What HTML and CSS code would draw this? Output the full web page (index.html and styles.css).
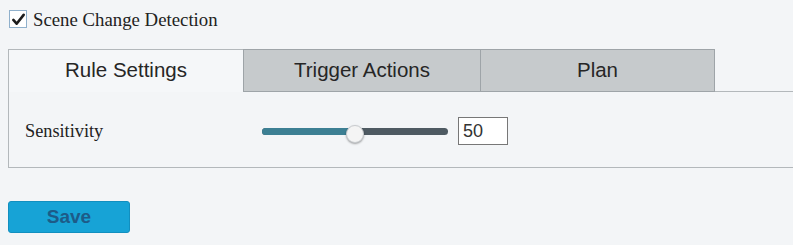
FILE: index.html
```html
<!DOCTYPE html>
<html>
<head>
<meta charset="utf-8">
<link rel="stylesheet" href="styles.css">
</head>
<body>
<div class="page">
  <div class="header">
    <span class="checkbox">
      <svg viewBox="0 0 16 16" width="15" height="15"><path d="M2.5 8.5 L6 12.5 L13.5 3" fill="none" stroke="#1c1c1c" stroke-width="2.8" stroke-linecap="round" stroke-linejoin="round"/></svg>
    </span>
    <span class="header-label">Scene Change Detection</span>
  </div>
  <div class="tabs">
    <div class="tab active">Rule Settings</div>
    <div class="tab mid">Trigger Actions</div>
    <div class="tab last">Plan</div>
    <div class="tab-fill"></div>
  </div>
  <div class="panel">
    <div class="row">
      <span class="row-label">Sensitivity</span>
      <div class="slider">
        <div class="track"><div class="fill"></div></div>
        <div class="thumb"></div>
      </div>
      <input class="num" type="text" value="50">
    </div>
  </div>
  <button class="save">Save</button>
</div>
</body>
</html>
```
FILE: styles.css
```css
* { box-sizing: border-box; }
html, body { margin: 0; padding: 0; }
body {
  background: #f3f5f7;
  width: 793px;
  height: 245px;
  overflow: hidden;
}
.page {
  padding: 10px 0 0 8px;
}
.header {
  display: flex;
  align-items: center;
  gap: 6px;
  height: 18px;
  margin-left: 1px;
}
.checkbox {
  width: 18px;
  height: 18px;
  border: 1px solid #8fb0cc;
  background: #ffffff;
  display: flex;
  align-items: center;
  justify-content: center;
}
.header-label {
  font-family: "Liberation Serif", "Times New Roman", serif;
  font-size: 18.8px;
  color: #222;
  padding-top: 2px;
}
.tabs {
  display: flex;
  margin-top: 21px;
  height: 43px;
}
.tab {
  font-family: "Liberation Sans", Arial, sans-serif;
  font-size: 20.5px;
  color: #262626;
  display: flex;
  align-items: center;
  justify-content: center;
  padding-bottom: 2px;
}
.tab.active {
  width: 235px;
  background: #f5f7f9;
  border-top: 1px solid #b3b8bb;
  border-left: 1px solid #b3b8bb;
}
.tab.mid {
  width: 237px;
  background: #c6cacc;
  border: 1px solid #9ea4a8;
  border-right: none;
}
.tab.last {
  width: 235px;
  background: #c6cacc;
  border: 1px solid #9ea4a8;
}
.tab-fill {
  flex: 1;
  border-bottom: 1px solid #b3b8bb;
}
.panel {
  height: 76px;
  border-left: 1px solid #b3b8bb;
  border-bottom: 1px solid #b3b8bb;
  padding: 3px 0 0 16px;
  display: flex;
  align-items: center;
}
.row {
  display: flex;
  align-items: center;
}
.row-label {
  font-family: "Liberation Serif", "Times New Roman", serif;
  font-size: 18.3px;
  color: #222;
  width: 237px;
}
.slider {
  position: relative;
  width: 186px;
  height: 20px;
  display: flex;
  align-items: center;
}
.track {
  width: 186px;
  height: 7px;
  border-radius: 4px;
  background: #4e5a62;
  overflow: hidden;
}
.fill {
  width: 93px;
  height: 100%;
  background: #3c7f93;
}
.thumb {
  position: absolute;
  left: 84px;
  top: 4px;
  width: 18px;
  height: 18px;
  border-radius: 50%;
  background: #f4f4f4;
  border: 1px solid #c9cccf;
  box-shadow: 0 1px 2px rgba(0,0,0,0.35);
}
.num {
  margin-left: 10px;
  width: 50px;
  height: 28px;
  border: 1px solid #777;
  background: #fff;
  font-family: "Liberation Sans", Arial, sans-serif;
  font-size: 18px;
  color: #333;
  padding: 1px 0 0 4px;
  outline: none;
}
.save {
  display: block;
  margin-top: 33px;
  width: 122px;
  height: 32px;
  background: #17a3d6;
  border: 1px solid #128fbf;
  border-radius: 3px;
  font-family: "Liberation Sans", Arial, sans-serif;
  font-weight: bold;
  font-size: 19px;
  color: #1d5b88;
  padding: 0;
}
```
